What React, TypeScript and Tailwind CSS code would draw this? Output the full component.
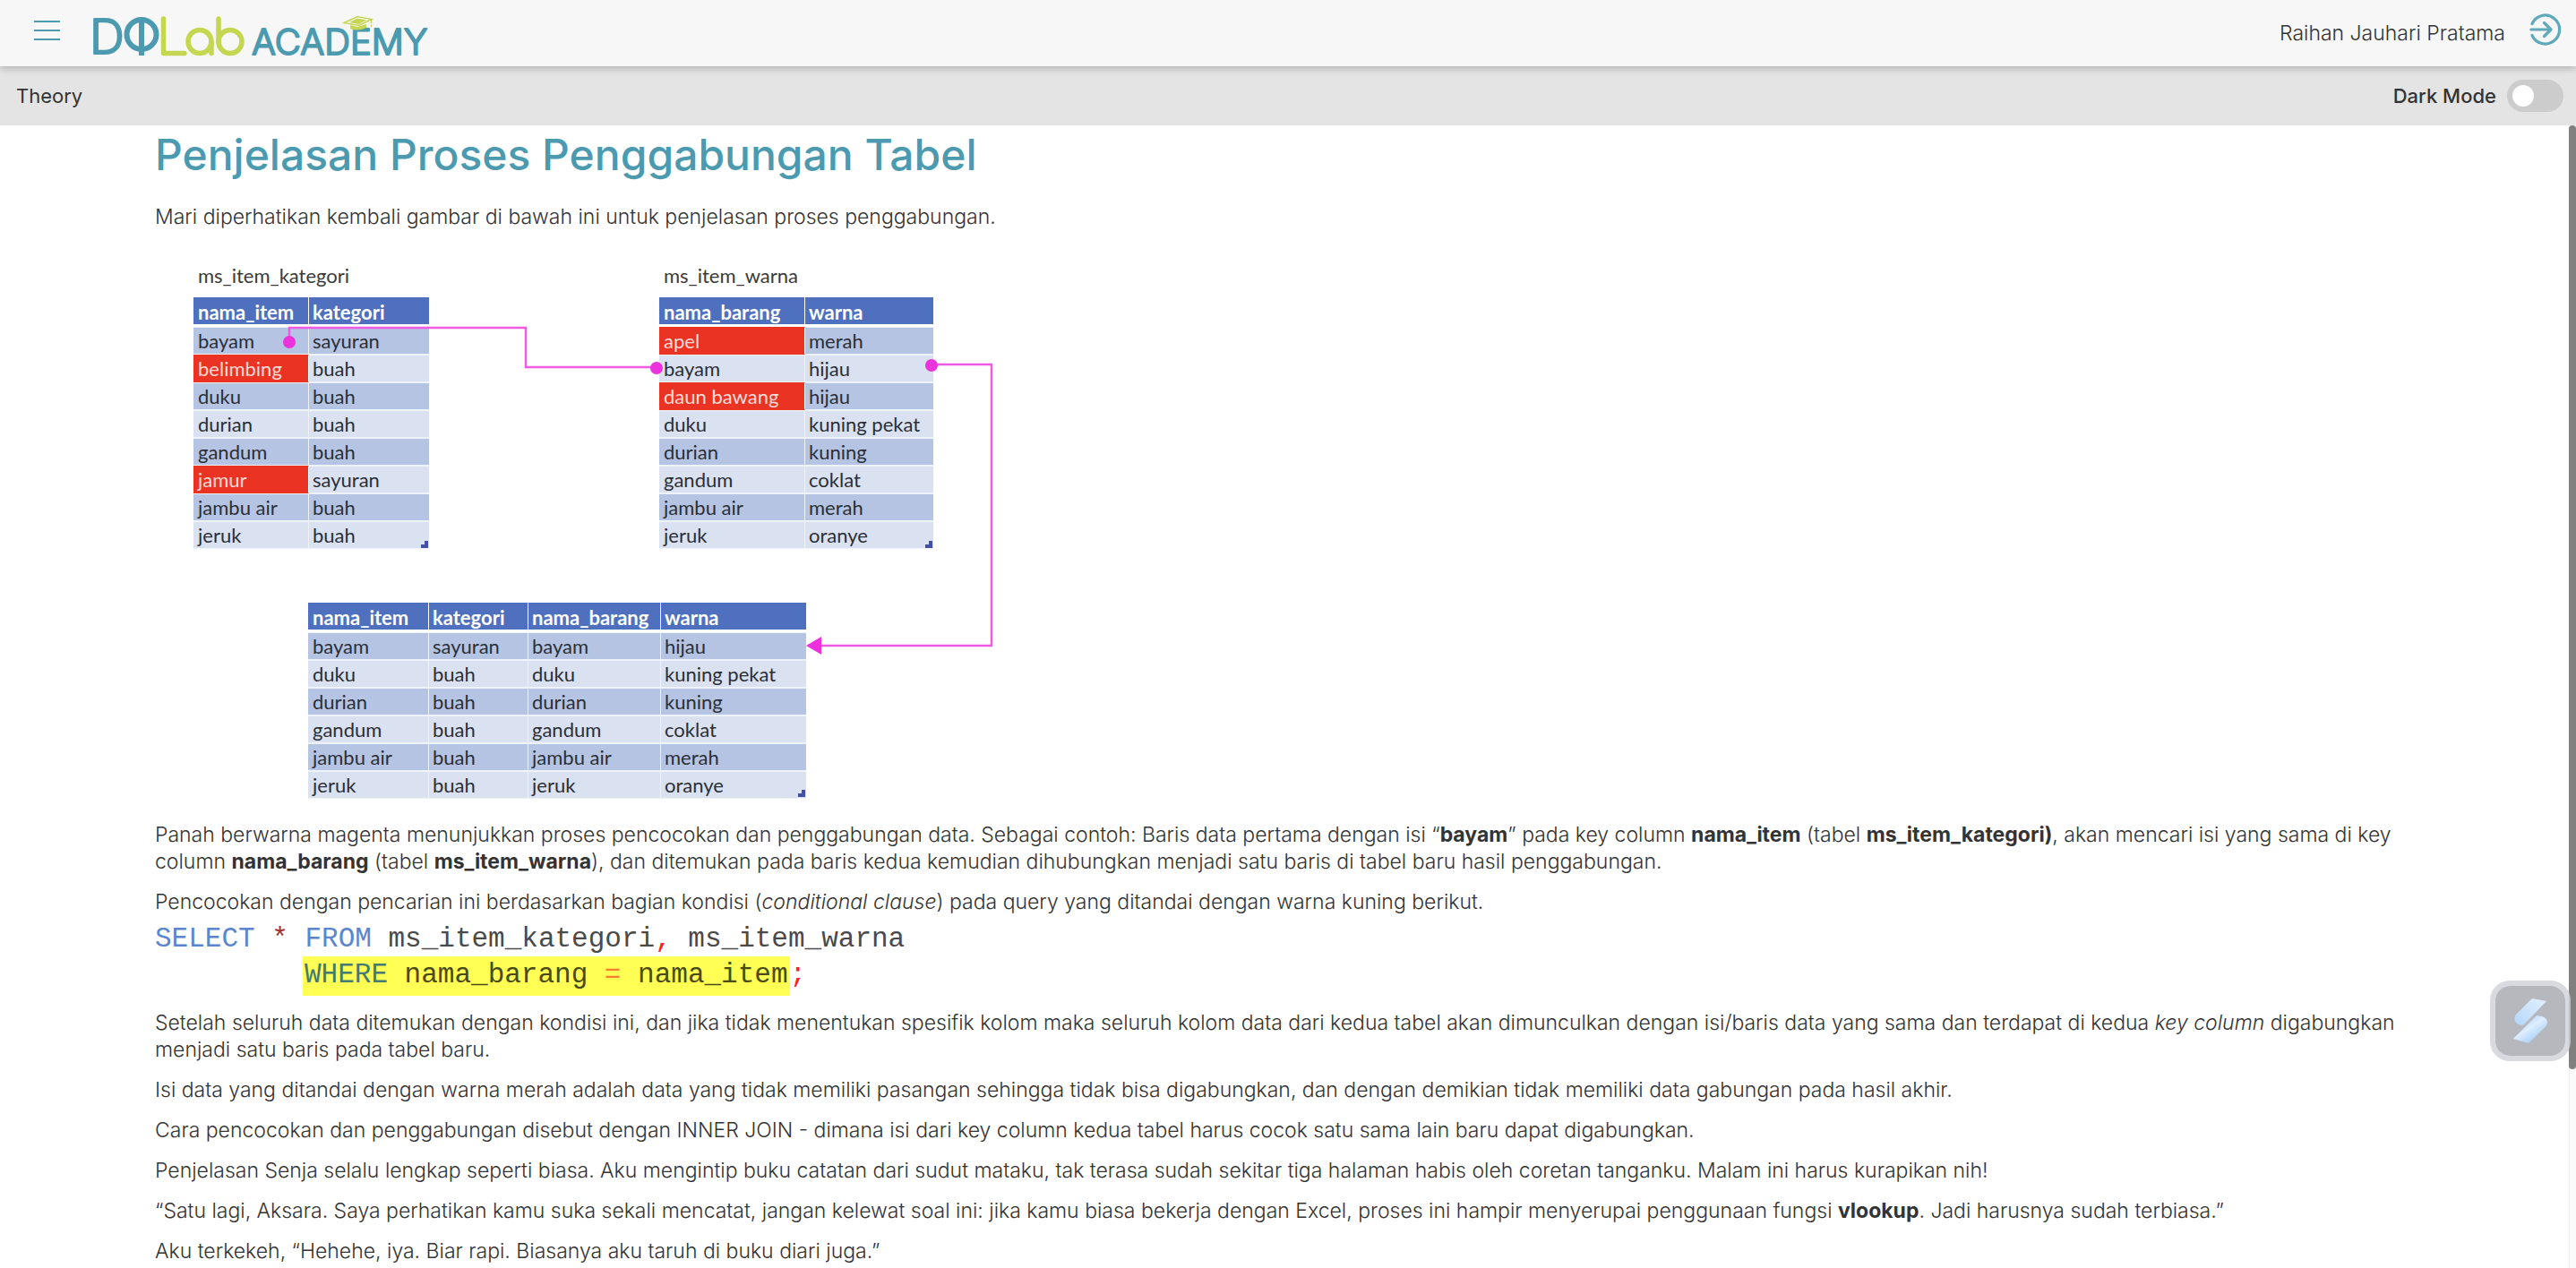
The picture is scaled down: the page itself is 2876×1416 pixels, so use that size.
import { useState, type ReactNode } from "react";

type Cell = string | { text: string; missing: true };

const miss = (text: string): Cell => ({ text, missing: true });

const kategoriRows: Cell[][] = [
  ["bayam", "sayuran"],
  [miss("belimbing"), "buah"],
  ["duku", "buah"],
  ["durian", "buah"],
  ["gandum", "buah"],
  [miss("jamur"), "sayuran"],
  ["jambu air", "buah"],
  ["jeruk", "buah"],
];

const warnaRows: Cell[][] = [
  [miss("apel"), "merah"],
  ["bayam", "hijau"],
  [miss("daun bawang"), "hijau"],
  ["duku", "kuning pekat"],
  ["durian", "kuning"],
  ["gandum", "coklat"],
  ["jambu air", "merah"],
  ["jeruk", "oranye"],
];

const joinedRows: Cell[][] = [
  ["bayam", "sayuran", "bayam", "hijau"],
  ["duku", "buah", "duku", "kuning pekat"],
  ["durian", "buah", "durian", "kuning"],
  ["gandum", "buah", "gandum", "coklat"],
  ["jambu air", "buah", "jambu air", "merah"],
  ["jeruk", "buah", "jeruk", "oranye"],
];

function Logo() {
  return (
    <svg viewBox="100 0 384 74" className="h-[74px] w-96" role="img" aria-label="DQLab Academy">
      <g fill="#4b9ab0" stroke="#4b9ab0" strokeLinejoin="round" fontFamily="Inter, sans-serif" fontWeight="300">
        <text x="100" y="60" fontSize="54" strokeWidth="2">D</text>
        <text x="281" y="61" fontSize="40" strokeWidth="2">ACADEMY</text>
      </g>
      <g fill="none" stroke="#4b9ab0" strokeWidth="6">
        <circle cx="158" cy="38.5" r="16.5" />
        <line x1="158" y1="20" x2="158" y2="62" />
      </g>
      <g fill="none" stroke="#c5d651" strokeWidth="5.5" strokeLinecap="round" strokeLinejoin="round">
        <polyline points="182.500,21 182.500,59.500 206,59.500" />
        <circle cx="223" cy="46.500" r="13" />
        <line x1="236" y1="47" x2="236" y2="59.500" />
        <circle cx="257" cy="46.500" r="13" />
        <line x1="244" y1="21" x2="244" y2="47" />
      </g>
      <path d="M391 28 L391 32 Q400 35.500 409 31 L409 27 L399 30 Z" fill="#c5d651" />
      <path d="M384 25.500 L399 18.500 L415 21.500 L400.500 28.500 Z" fill="#f7f7f7" stroke="#c5d651" strokeWidth="1.500" />
      <path d="M390 25 L399 20.500 L409 22.500 L400.500 27 Z" fill="#c5d651" />
      <path d="M414.500 22 V30" stroke="#c5d651" strokeWidth="1.500" strokeDasharray="4 1.500" />
    </svg>
  );
}

function DataTable({ name, columns, widths, rows }: { name?: string; columns: string[]; widths: string[]; rows: Cell[][] }) {
  return (
    <table className="table-fixed border-separate border-spacing-0 text-left">
      {name && <caption className="h-[38px] pl-[5px] text-left leading-7">{name}</caption>}
      <thead>
        <tr>
          {columns.map((c, i) => (
            <th
              key={c}
              scope="col"
              className={`${widths[i]} h-[33px] border-b-[3px] border-white bg-[#4e70be] px-1 pt-1 align-middle leading-[26px] font-bold whitespace-nowrap text-white first:pl-[5px] not-last:border-r`}
            >
              {c}
            </th>
          ))}
        </tr>
      </thead>
      <tbody>
        {rows.map((row, r) => (
          <tr key={r} className="odd:bg-[#b5c4e3] even:bg-[#dae1f0]">
            {row.map((cell, c) => {
              const missing = typeof cell !== "string";
              return (
                <td
                  key={c}
                  className={`h-[31px] border-y px-1 leading-[29px] whitespace-nowrap first:pl-[5px] not-last:border-r ${
                    missing ? "border-y-[#ea3323] border-r-white bg-[#ea3323] text-[#fbdcd8]" : "border-[#eef2f9] text-[#2b2f36]"
                  }`}
                >
                  {missing ? cell.text : cell}
                </td>
              );
            })}
          </tr>
        ))}
      </tbody>
    </table>
  );
}

function JoinDiagram() {
  return (
    <figure className="relative mb-[15px] flex h-[630px] w-[960px] flex-col gap-[60px] pt-[22px] font-['Lato','Open_Sans',sans-serif] text-[22px] font-normal text-[#3a3a3a]">
      <div className="flex gap-[257px] pl-[43px]">
        <DataTable name="ms_item_kategori" columns={["nama_item", "kategori"]} widths={["w-[129px]", "w-[134px]"]} rows={kategoriRows} />
        <DataTable name="ms_item_warna" columns={["nama_barang", "warna"]} widths={["w-[163px]", "w-[143px]"]} rows={warnaRows} />
      </div>
      <div className="pl-[171px]">
        <DataTable
          columns={["nama_item", "kategori", "nama_barang", "warna"]}
          widths={["w-[135px]", "w-[111px]", "w-[148px]", "w-[162px]"]}
          rows={joinedRows}
        />
      </div>
      <svg viewBox="0 0 960 630" className="pointer-events-none absolute inset-0 h-[630px] w-[960px]" aria-hidden="true">
        <g fill="none" stroke="#f05ae4" strokeWidth="2.500">
          <path d="M150 110 V94 H414 V138 H560" />
          <path d="M867 135 H934 V449 H740" />
        </g>
        <g fill="#ea33dc">
          <circle cx="150" cy="110" r="7" />
          <circle cx="560" cy="139" r="7" />
          <circle cx="867" cy="136" r="7" />
          <path d="M727 449 L744 439 V459 Z" />
        </g>
        <g fill="#4250a8">
          <path d="M297 340 V336 H301 V332 H305 V340 Z" />
          <path d="M860 340 V336 H864 V332 H868 V340 Z" />
          <path d="M718 618 V614 H722 V610 H726 V618 Z" />
        </g>
      </svg>
    </figure>
  );
}

function P({ children }: { children: ReactNode }) {
  return <p className="mb-[15px]">{children}</p>;
}

function B({ children }: { children: ReactNode }) {
  return <b className="font-bold">{children}</b>;
}

export default function App() {
  const [dark, setDark] = useState(false);
  return (
    <div className="flex h-screen flex-col overflow-hidden bg-white font-['Inter','Open_Sans',sans-serif] text-[23px] leading-[30px] text-[#333]">
      <header className="relative z-10 flex h-[74px] shrink-0 items-center bg-[#f7f7f7] pr-4 pl-[38px] shadow-[0_2px_8px_rgba(0,0,0,0.25)]">
        <button type="button" aria-label="Menu" className="mr-[33px] flex w-[29px] flex-col gap-2 pb-1.5">
          <span className="h-0.5 bg-[#4b9ab0]" />
          <span className="h-0.5 bg-[#4b9ab0]" />
          <span className="h-0.5 bg-[#4b9ab0]" />
        </button>
        <a href="#">
          <Logo />
        </a>
        <div className="ml-auto flex items-center gap-[27px]">
          <span className="font-light">Raihan Jauhari Pratama</span>
          <button type="button" aria-label="Keluar" className="pb-2">
            <svg viewBox="0 0 36 36" className="size-9" fill="none" stroke="#5fa9ba" strokeWidth="3.200" strokeLinecap="round" strokeLinejoin="round">
              <path d="M3 11.500 A16 16 0 1 1 3 24.500" />
              <path d="M1.800 18 H23" />
              <path d="M16.500 10.500 L24 18 L16.500 25.500" />
            </svg>
          </button>
        </div>
      </header>

      <div className="flex h-[66px] shrink-0 items-center justify-between bg-[#e4e4e4] pr-3.5 pl-[18px] text-[22px]">
        <h2>Theory</h2>
        <label className="flex items-center gap-3 font-medium">
          Dark Mode
          <input type="checkbox" role="switch" checked={dark} onChange={() => setDark(!dark)} className="peer sr-only" />
          <span className="flex h-9 w-[63px] items-center rounded-full bg-[#ccc] px-1.5 peer-checked:justify-end peer-checked:bg-[#4b9ab0]">
            <span className="size-6 rounded-full bg-white" />
          </span>
        </label>
      </div>

      <div className="flex min-h-0 flex-1">
        <main className="min-w-0 flex-1 overflow-hidden px-[173px] font-light">
          <h1 className="mb-[21px] text-5xl leading-[66px] font-medium text-[#4b9ab0]">Penjelasan Proses Penggabungan Tabel</h1>
          <P>Mari diperhatikan kembali gambar di bawah ini untuk penjelasan proses penggabungan.</P>
          <JoinDiagram />
          <P>
            Panah berwarna magenta menunjukkan proses pencocokan dan penggabungan data. Sebagai contoh: Baris data pertama dengan isi “<B>bayam</B>” pada key column{" "}
            <B>nama_item</B> (tabel <B>ms_item_kategori)</B>, akan mencari isi yang sama di key column <B>nama_barang</B> (tabel <B>ms_item_warna</B>), dan ditemukan
            pada baris kedua kemudian dihubungkan menjadi satu baris di tabel baru hasil penggabungan.
          </P>
          <p>
            Pencocokan dengan pencarian ini berdasarkan bagian kondisi (<i>conditional clause</i>) pada query yang ditandai dengan warna kuning berikut.
          </p>
          <pre className="mb-[15px] pt-2 font-['Liberation_Mono',monospace] text-[31px] font-normal text-[#4a4a4a]">
            <code className="flex flex-col">
              <span className="leading-[38px]">
                <span className="text-[#5b86cf]">SELECT</span> <span className="text-[#a03030]">*</span> <span className="text-[#5b86cf]">FROM</span> ms_item_kategori
                <span className="text-[#ff2020]">,</span> ms_item_warna
              </span>
              <span className="flex pl-[165px] leading-[41px]">
                <span className="bg-[#ffff54] px-0.5 pb-[3px] text-[#4a4a18]">
                  <span className="text-[#447a70]">WHERE</span> nama_barang <span className="text-[#f58030]">=</span> nama_item
                </span>
                <span className="text-[#ff2020]">;</span>
              </span>
            </code>
          </pre>
          <P>
            Setelah seluruh data ditemukan dengan kondisi ini, dan jika tidak menentukan spesifik kolom maka seluruh kolom data dari kedua tabel akan dimunculkan dengan
            isi/baris data yang sama dan terdapat di kedua <i>key column</i> digabungkan menjadi satu baris pada tabel baru.
          </P>
          <P>
            Isi data yang ditandai dengan warna merah adalah data yang tidak memiliki pasangan sehingga tidak bisa digabungkan, dan dengan demikian tidak memiliki data
            gabungan pada hasil akhir.
          </P>
          <P>
            Cara pencocokan dan penggabungan disebut dengan INNER JOIN - dimana isi dari key column kedua tabel harus cocok satu sama lain baru dapat digabungkan.
          </P>
          <P>
            Penjelasan Senja selalu lengkap seperti biasa. Aku mengintip buku catatan dari sudut mataku, tak terasa sudah sekitar tiga halaman habis oleh coretan
            tanganku. Malam ini harus kurapikan nih!
          </P>
          <P>
            “Satu lagi, Aksara. Saya perhatikan kamu suka sekali mencatat, jangan kelewat soal ini: jika kamu biasa bekerja dengan Excel, proses ini hampir menyerupai
            penggunaan fungsi <B>vlookup</B>. Jadi harusnya sudah terbiasa.”
          </P>
          <P>Aku terkekeh, “Hehehe, iya. Biar rapi. Biasanya aku taruh di buku diari juga.”</P>
        </main>
        <div className="w-2 bg-[#fafafa] shadow-[inset_1px_0_0_#eeeeee]">
          <div className="h-[1054px] rounded-full bg-[#808080]" />
        </div>
      </div>

      <button
        type="button"
        aria-label="Asisten"
        className="absolute right-1.5 bottom-[231px] z-20 flex size-[90px] items-center justify-center rounded-[22px] border-6 border-[#d0d1d7]/80 bg-[#b7b8be] bg-clip-padding"
      >
        <svg viewBox="0 0 38 50" className="h-[50px] w-[38px]" aria-hidden="true">
          <defs>
            <linearGradient id="ribbonTop" x1="1" y1="0" x2="0" y2="1">
              <stop offset="0" stopColor="#e3f1fe" />
              <stop offset="1" stopColor="#b3d6f8" />
            </linearGradient>
            <linearGradient id="ribbonBottom" x1="0.300" y1="0.300" x2="0.700" y2="0.800">
              <stop offset="0" stopColor="#c3dffa" />
              <stop offset="0.350" stopColor="#deeefd" />
              <stop offset="1" stopColor="#aed3f8" />
            </linearGradient>
          </defs>
          <path d="M21 0 L37 3 L12 29 Q10 30.500 7 29.500 Q1 27.500 1.500 21 Q2 18.500 4 17 Z" fill="url(#ribbonTop)" />
          <path d="M0 45 L26 19 L32 20 Q38 22 38 27 Q38 30 35 32.500 L17 50 Z" fill="url(#ribbonBottom)" />
        </svg>
      </button>
    </div>
  );
}
